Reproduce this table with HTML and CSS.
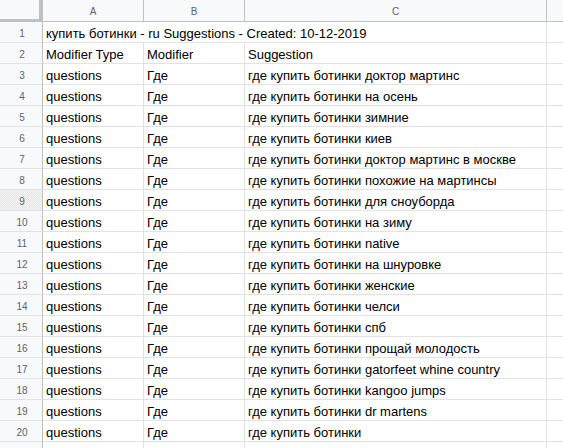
FILE: index.html
```html
<!DOCTYPE html>
<html>
<head>
<meta charset="utf-8">
<link rel="stylesheet" href="styles.css">
</head>
<body>
<div class="sheet">
  <div class="corner"></div>
  <div class="colhead">A</div>
  <div class="colhead">B</div>
  <div class="colhead">C</div>
  <div class="colhead last"></div>

  <div class="rownum">1</div>
  <div class="cell span3">купить ботинки - ru Suggestions - Created: 10-12-2019</div>
  <div class="cell last"></div>

  <div class="rownum">2</div>
  <div class="cell">Modifier Type</div>
  <div class="cell">Modifier</div>
  <div class="cell">Suggestion</div>
  <div class="cell last"></div>

  <div class="rownum">3</div><div class="cell">questions</div><div class="cell">Где</div><div class="cell">где купить ботинки доктор мартинс</div><div class="cell last"></div>
  <div class="rownum">4</div><div class="cell">questions</div><div class="cell">Где</div><div class="cell">где купить ботинки на осень</div><div class="cell last"></div>
  <div class="rownum">5</div><div class="cell">questions</div><div class="cell">Где</div><div class="cell">где купить ботинки зимние</div><div class="cell last"></div>
  <div class="rownum">6</div><div class="cell">questions</div><div class="cell">Где</div><div class="cell">где купить ботинки киев</div><div class="cell last"></div>
  <div class="rownum">7</div><div class="cell">questions</div><div class="cell">Где</div><div class="cell">где купить ботинки доктор мартинс в москве</div><div class="cell last"></div>
  <div class="rownum">8</div><div class="cell">questions</div><div class="cell">Где</div><div class="cell">где купить ботинки похожие на мартинсы</div><div class="cell last"></div>
  <div class="rownum hover">9</div><div class="cell">questions</div><div class="cell">Где</div><div class="cell">где купить ботинки для сноуборда</div><div class="cell last"></div>
  <div class="rownum">10</div><div class="cell">questions</div><div class="cell">Где</div><div class="cell">где купить ботинки на зиму</div><div class="cell last"></div>
  <div class="rownum">11</div><div class="cell">questions</div><div class="cell">Где</div><div class="cell">где купить ботинки native</div><div class="cell last"></div>
  <div class="rownum">12</div><div class="cell">questions</div><div class="cell">Где</div><div class="cell">где купить ботинки на шнуровке</div><div class="cell last"></div>
  <div class="rownum">13</div><div class="cell">questions</div><div class="cell">Где</div><div class="cell">где купить ботинки женские</div><div class="cell last"></div>
  <div class="rownum">14</div><div class="cell">questions</div><div class="cell">Где</div><div class="cell">где купить ботинки челси</div><div class="cell last"></div>
  <div class="rownum">15</div><div class="cell">questions</div><div class="cell">Где</div><div class="cell">где купить ботинки спб</div><div class="cell last"></div>
  <div class="rownum">16</div><div class="cell">questions</div><div class="cell">Где</div><div class="cell">где купить ботинки прощай молодость</div><div class="cell last"></div>
  <div class="rownum">17</div><div class="cell">questions</div><div class="cell">Где</div><div class="cell">где купить ботинки gatorfeet whine country</div><div class="cell last"></div>
  <div class="rownum">18</div><div class="cell">questions</div><div class="cell">Где</div><div class="cell">где купить ботинки kangoo jumps</div><div class="cell last"></div>
  <div class="rownum">19</div><div class="cell">questions</div><div class="cell">Где</div><div class="cell">где купить ботинки dr martens</div><div class="cell last"></div>
  <div class="rownum">20</div><div class="cell">questions</div><div class="cell">Где</div><div class="cell">где купить ботинки</div><div class="cell last"></div>

  <div class="rownum"></div><div class="cell"></div><div class="cell"></div><div class="cell"></div><div class="cell last"></div>
</div>
</body>
</html>
```

FILE: styles.css
```css
html, body {
  margin: 0;
  padding: 0;
  background: #ffffff;
  overflow: hidden;
}

.sheet {
  display: grid;
  grid-template-columns: 43px 101px 101px 302px 1fr;
  grid-template-rows: 22px;
  grid-auto-rows: 21px;
  font-family: "Liberation Sans", Arial, sans-serif;
  font-size: 13px;
  color: #000000;
}

.corner {
  background: #f8f9fa;
  border-right: 4px solid #c0c0c0;
  border-bottom: 3px solid #c0c0c0;
}

.colhead {
  background: #f8f9fa;
  border-right: 1px solid #c0c0c0;
  border-bottom: 1px solid #c0c0c0;
  color: #5f6368;
  font-size: 10px;
  display: flex;
  align-items: center;
  justify-content: center;
  padding-top: 1px;
}

.rownum {
  background: #f8f9fa;
  border-right: 1px solid #c0c0c0;
  border-bottom: 1px solid #e2e2e2;
  color: #5f6368;
  font-size: 10px;
  display: flex;
  align-items: center;
  justify-content: center;
  padding-left: 2px;
  padding-top: 2px;
}

.rownum.hover {
  background: repeating-conic-gradient(#e4e4e4 0 25%, #f6f6f6 0 50%) 0 0 / 2px 2px;
}

.cell {
  border-right: 1px solid #e2e2e2;
  border-bottom: 1px solid #e2e2e2;
  padding: 4px 0 0 3px;
  line-height: 16px;
  white-space: nowrap;
  overflow: hidden;
}

.span3 {
  grid-column: span 3;
}

.last {
  border-right: none;
}

.colhead.last {
  border-right: none;
}
```
